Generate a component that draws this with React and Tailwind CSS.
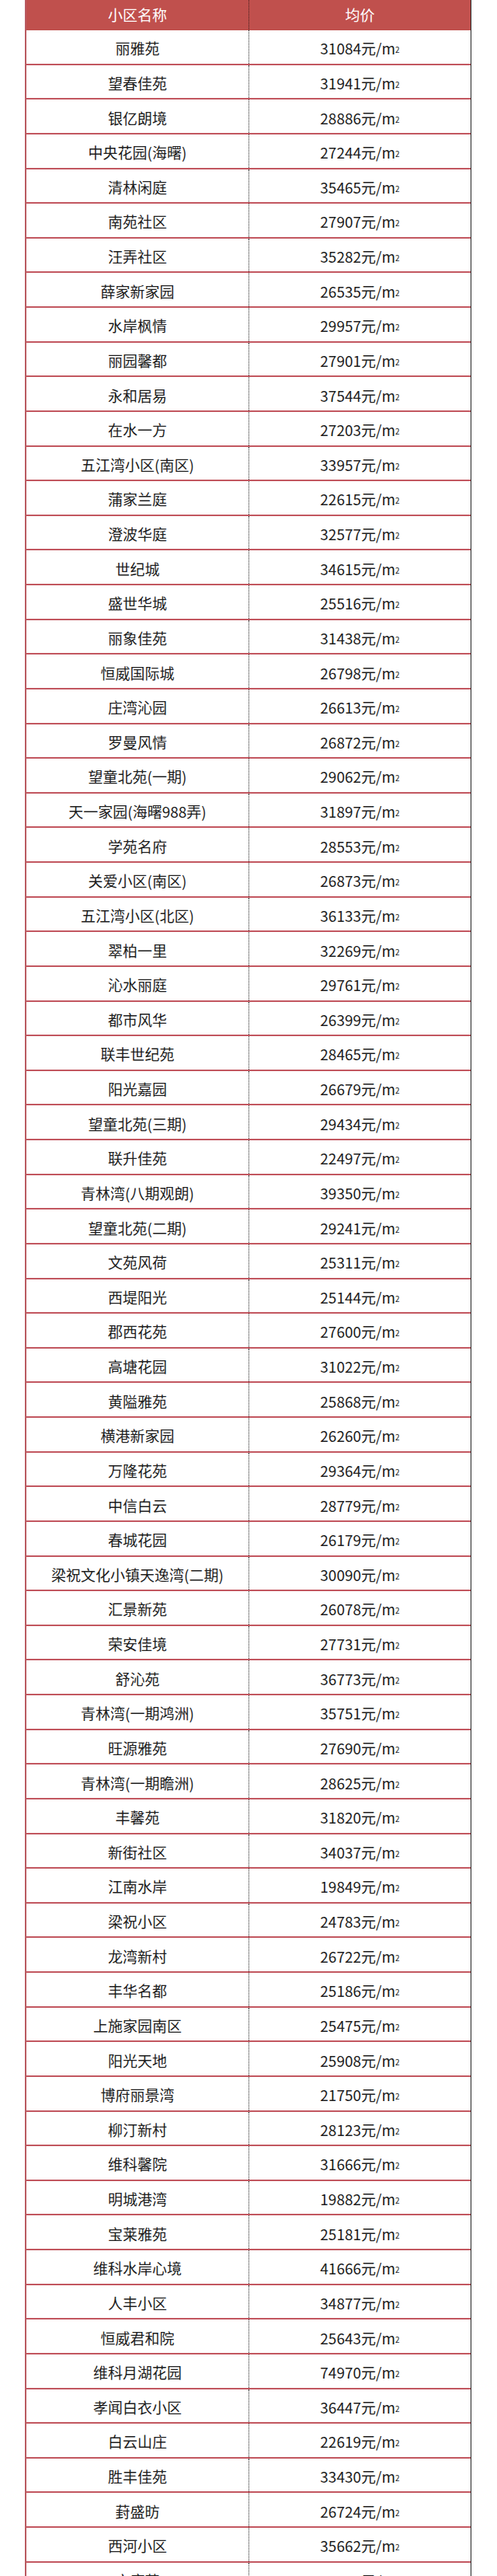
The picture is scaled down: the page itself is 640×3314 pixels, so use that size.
import React from 'react';

const rows = [
  ['丽雅苑', '31084'],
  ['望春佳苑', '31941'],
  ['银亿朗境', '28886'],
  ['中央花园(海曙)', '27244'],
  ['清林闲庭', '35465'],
  ['南苑社区', '27907'],
  ['汪弄社区', '35282'],
  ['薛家新家园', '26535'],
  ['水岸枫情', '29957'],
  ['丽园馨都', '27901'],
  ['永和居易', '37544'],
  ['在水一方', '27203'],
  ['五江湾小区(南区)', '33957'],
  ['蒲家兰庭', '22615'],
  ['澄波华庭', '32577'],
  ['世纪城', '34615'],
  ['盛世华城', '25516'],
  ['丽象佳苑', '31438'],
  ['恒威国际城', '26798'],
  ['庄湾沁园', '26613'],
  ['罗曼风情', '26872'],
  ['望童北苑(一期)', '29062'],
  ['天一家园(海曙988弄)', '31897'],
  ['学苑名府', '28553'],
  ['关爱小区(南区)', '26873'],
  ['五江湾小区(北区)', '36133'],
  ['翠柏一里', '32269'],
  ['沁水丽庭', '29761'],
  ['都市风华', '26399'],
  ['联丰世纪苑', '28465'],
  ['阳光嘉园', '26679'],
  ['望童北苑(三期)', '29434'],
  ['联升佳苑', '22497'],
  ['青林湾(八期观朗)', '39350'],
  ['望童北苑(二期)', '29241'],
  ['文苑风荷', '25311'],
  ['西堤阳光', '25144'],
  ['郡西花苑', '27600'],
  ['高塘花园', '31022'],
  ['黄隘雅苑', '25868'],
  ['横港新家园', '26260'],
  ['万隆花苑', '29364'],
  ['中信白云', '28779'],
  ['春城花园', '26179'],
  ['梁祝文化小镇天逸湾(二期)', '30090'],
  ['汇景新苑', '26078'],
  ['荣安佳境', '27731'],
  ['舒沁苑', '36773'],
  ['青林湾(一期鸿洲)', '35751'],
  ['旺源雅苑', '27690'],
  ['青林湾(一期瞻洲)', '28625'],
  ['丰馨苑', '31820'],
  ['新街社区', '34037'],
  ['江南水岸', '19849'],
  ['梁祝小区', '24783'],
  ['龙湾新村', '26722'],
  ['丰华名都', '25186'],
  ['上施家园南区', '25475'],
  ['阳光天地', '25908'],
  ['博府丽景湾', '21750'],
  ['柳汀新村', '28123'],
  ['维科馨院', '31666'],
  ['明城港湾', '19882'],
  ['宝莱雅苑', '25181'],
  ['维科水岸心境', '41666'],
  ['人丰小区', '34877'],
  ['恒威君和院', '25643'],
  ['维科月湖花园', '74970'],
  ['孝闻白衣小区', '36447'],
  ['白云山庄', '22619'],
  ['胜丰佳苑', '33430'],
  ['葑盛昉', '26724'],
  ['西河小区', '35662'],
  ['文康苑', '30338'],
];

const Price = ({ value }) => (
  <span>
    {value}元/m<sup className="text-[10px] relative top-[-2px]">2</sup>
  </span>
);

export default function App() {
  return (
    <div className="bg-white pl-[32px] font-['Noto_Sans_CJK_SC',sans-serif] text-[19px] text-[#1c1c1c]">
      <div className="w-[575px] border-l-2 border-[#b95a60] border-r border-r-[#222] border-r-dotted">
        {/* header */}
        <div className="flex h-[39px] bg-[#c0504d] text-white leading-none">
          <div className="w-[286px] flex items-center justify-center pb-[2px]">小区名称</div>
          <div className="flex-1 flex items-center justify-center pb-[2px] border-l border-dotted border-[#3a1a1a]">均价</div>
        </div>

        {rows.map(([name, price], i) => (
          <div key={i} className="flex h-[44.64px] border-b-2 border-[#c2565f] leading-none">
            <div className="w-[286px] flex items-center justify-center pt-[3px] whitespace-nowrap">{name}</div>
            <div className="flex-1 flex items-center justify-center pt-[3px] border-l border-dotted border-[#222]">
              <Price value={price} />
            </div>
          </div>
        ))}
      </div>
    </div>
  );
}
